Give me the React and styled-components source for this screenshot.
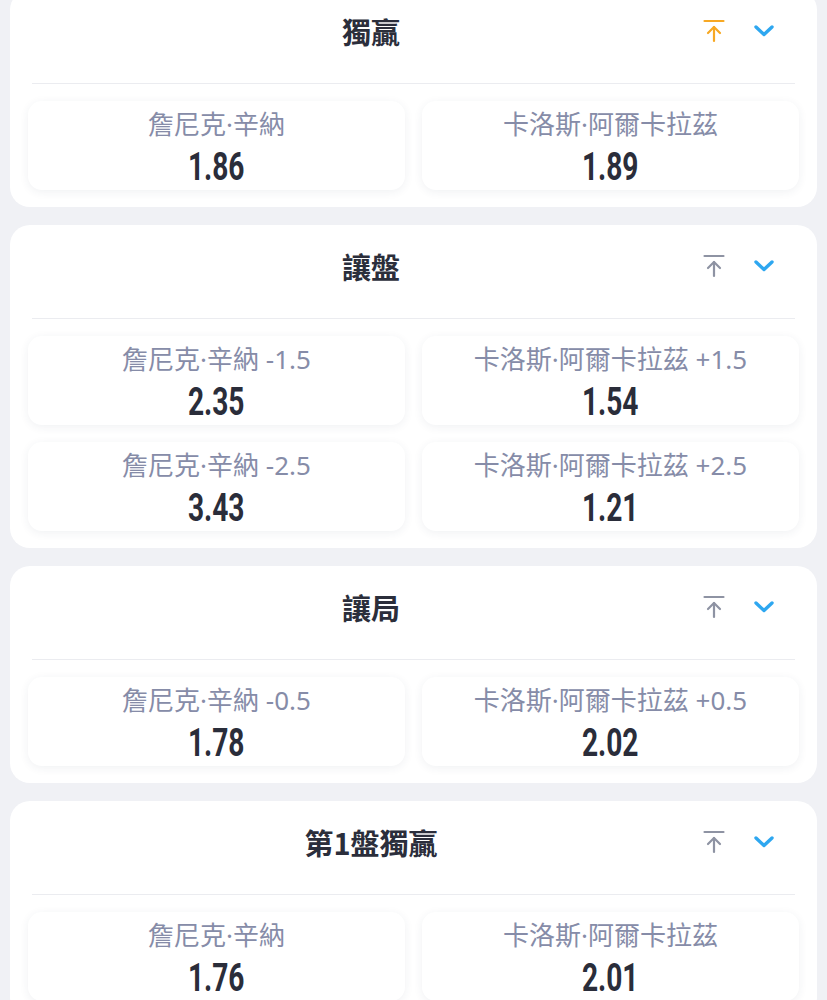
import React from "react";
import styled, { createGlobalStyle } from "styled-components";

const markets = [
  {
    title: "獨贏",
    pinned: true,
    options: [
      { label: "詹尼克·辛納", odds: "1.86" },
      { label: "卡洛斯·阿爾卡拉茲", odds: "1.89" },
    ],
  },
  {
    title: "讓盤",
    options: [
      { label: "詹尼克·辛納 -1.5", odds: "2.35" },
      { label: "卡洛斯·阿爾卡拉茲 +1.5", odds: "1.54" },
      { label: "詹尼克·辛納 -2.5", odds: "3.43" },
      { label: "卡洛斯·阿爾卡拉茲 +2.5", odds: "1.21" },
    ],
  },
  {
    title: "讓局",
    options: [
      { label: "詹尼克·辛納 -0.5", odds: "1.78" },
      { label: "卡洛斯·阿爾卡拉茲 +0.5", odds: "2.02" },
    ],
  },
  {
    title: "第1盤獨贏",
    options: [
      { label: "詹尼克·辛納", odds: "1.76" },
      { label: "卡洛斯·阿爾卡拉茲", odds: "2.01" },
    ],
  },
];

const GlobalStyle = createGlobalStyle`
  html, body {
    margin: 0;
    padding: 0;
    background: #f0f1f5;
    overflow: hidden;
  }
  body {
    font-family: "Noto Sans CJK TC", "Noto Sans", sans-serif;
  }
`;

const List = styled.div`
  display: flex;
  flex-direction: column;
  gap: 18px;
  padding: 0 10px;
  margin-top: -10px;
`;

const Card = styled.section`
  background: #fff;
  border-radius: 20px;
  padding: 0 18px 17px;
`;

const Header = styled.div`
  display: flex;
  align-items: center;
  height: 94px;
  margin: 0 4px;
  border-bottom: 1px solid #ebecf0;
  padding-bottom: 12px;
  box-sizing: border-box;
`;

const Title = styled.h2`
  flex: 1;
  margin: 0;
  padding-left: 10px;
  text-align: center;
  font-size: 29px;
  font-weight: 700;
  color: #2b2e3b;
`;

const Actions = styled.div`
  width: 95px;
  display: flex;
  align-items: center;
  justify-content: flex-end;
  gap: 28px;
  padding-right: 20px;
  box-sizing: border-box;
`;

const IconButton = styled.span`
  display: flex;
  width: 22px;
  height: 24px;
  align-items: center;
  justify-content: center;
`;

const Grid = styled.div`
  display: grid;
  grid-template-columns: 1fr 1fr;
  gap: 17px;
  margin-top: 17px;
`;

const Option = styled.div`
  height: 89px;
  border-radius: 14px;
  background: #fff;
  box-shadow: 0 2px 10px rgba(40, 50, 90, 0.07);
  display: flex;
  flex-direction: column;
  align-items: center;
  justify-content: center;
  gap: 8px;
  padding-top: 5px;
  box-sizing: border-box;
`;

const Label = styled.span`
  font-family: "Noto Sans", "Noto Sans CJK TC", sans-serif;
  font-size: 26px;
  line-height: 30px;
  color: #868ca8;
  font-weight: 400;
`;

const Odds = styled.span`
  display: inline-block;
  font-family: Roboto, "Liberation Sans", sans-serif;
  font-size: 38px;
  line-height: 40px;
  font-weight: 700;
  color: #2a2d3a;
  transform: scaleX(0.74);
`;

const PinIcon = ({ color }) => (
  <svg width="22" height="24" viewBox="0 0 22 24" fill="none" stroke={color} strokeWidth="2.2" strokeLinecap="round" strokeLinejoin="round">
    <line x1="1.5" y1="2" x2="20.5" y2="2" />
    <line x1="11" y1="8" x2="11" y2="22" />
    <polyline points="5,14 11,8 17,14" />
  </svg>
);

const ChevronIcon = () => (
  <svg width="22" height="14" viewBox="0 0 22 14" fill="none" stroke="#2ea7f0" strokeWidth="3.4" strokeLinecap="round" strokeLinejoin="round">
    <polyline points="3,3 11,10.5 19,3" />
  </svg>
);

const Market = ({ market }) => (
  <Card>
    <Header>
      <Title>{market.title}</Title>
      <Actions>
        <IconButton>
          <PinIcon color={market.pinned ? "#f7a823" : "#8e93a3"} />
        </IconButton>
        <IconButton>
          <ChevronIcon />
        </IconButton>
      </Actions>
    </Header>
    <Grid>
      {market.options.map((o) => (
        <Option key={o.label}>
          <Label>{o.label}</Label>
          <Odds>{o.odds}</Odds>
        </Option>
      ))}
    </Grid>
  </Card>
);

export default function App() {
  return (
    <>
      <GlobalStyle />
      <List>
        {markets.map((m) => (
          <Market key={m.title} market={m} />
        ))}
      </List>
    </>
  );
}
